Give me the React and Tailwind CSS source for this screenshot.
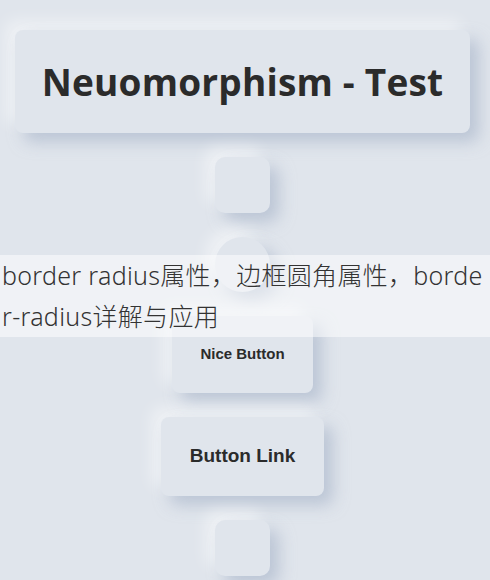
import React from 'react';

// soft "neumorphic" raised surface shared by every block on the page
const raised =
  'bg-[#e0e5ec] shadow-[9px_9px_16px_rgba(163,177,198,0.6),-9px_-9px_16px_rgba(255,255,255,0.5)]';

function App() {
  return (
    <div className="relative min-h-screen overflow-hidden bg-[#e0e5ec] font-['Liberation_Sans',sans-serif] text-[#2b2b2b]">
      <div className="flex flex-col items-center gap-6 pr-[5px] pt-[30px]">
        {/* Title card */}
        <div className={`${raised} flex h-[103px] w-[455px] items-center justify-center rounded-lg`}>
          <h1 className="font-['Open_Sans',sans-serif] text-[37px] font-bold tracking-[0.2px]">
            Neuomorphism - Test
          </h1>
        </div>

        {/* Rounded square */}
        <div className={`${raised} h-[56px] w-[55px] rounded-[10px]`} />

        {/* Circle */}
        <div className={`${raised} h-[55px] w-[55px] rounded-full`} />

        {/* Buttons */}
        <button className={`${raised} h-[77px] w-[141px] rounded-lg text-[15px] font-bold`}>
          Nice Button
        </button>
        <a href="#" className={`${raised} flex h-[79px] w-[163px] items-center justify-center rounded-lg text-[19px] font-bold`}>
          Button Link
        </a>

        {/* Rounded square */}
        <div className={`${raised} h-[56px] w-[55px] rounded-[10px]`} />
      </div>

      {/* Banner strip over the page */}
      <div className="absolute left-0 right-0 top-[255px] bg-white/50 px-[2px] font-['Noto_Sans','Noto_Sans_CJK_SC',sans-serif] text-[25px] font-light leading-[41px] tracking-[0.3px] text-[#333] break-all">
        border radius属性，边框圆角属性，border-radius详解与应用
      </div>
    </div>
  );
}

export default App;
